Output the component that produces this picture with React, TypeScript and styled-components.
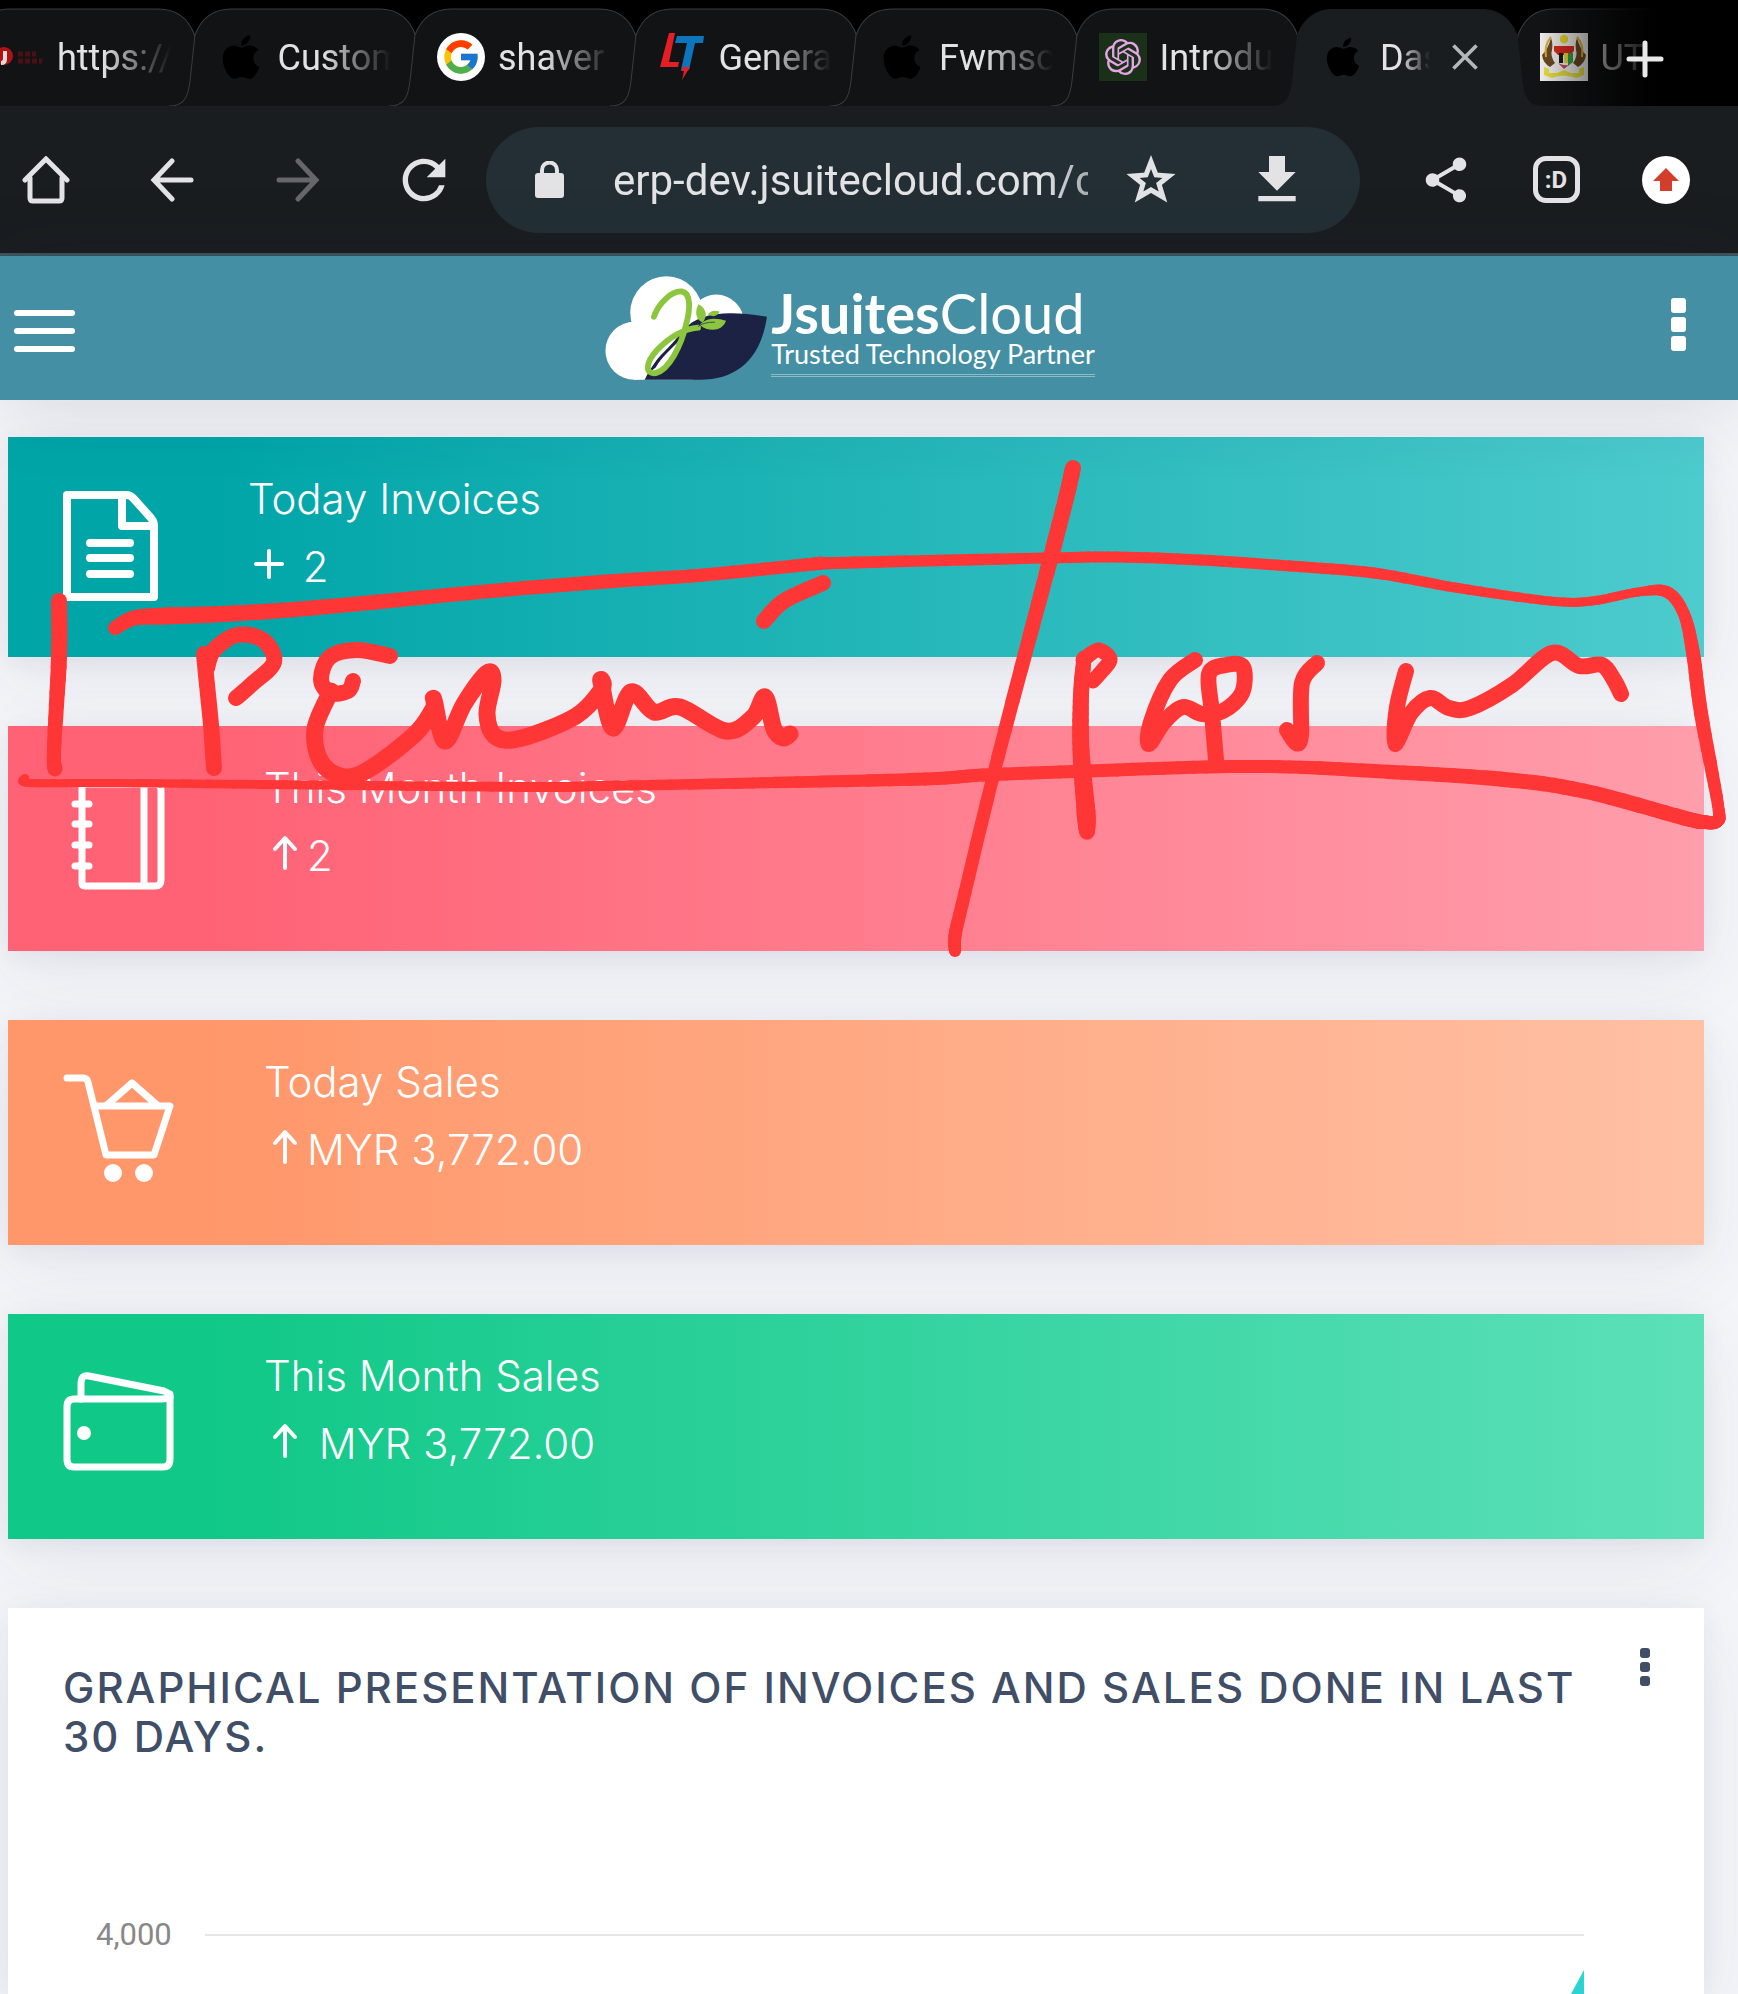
import React from "react";
import styled, { createGlobalStyle } from "styled-components";
import { FaApple } from "react-icons/fa";
import { FcGoogle } from "react-icons/fc";
import { SiOpenai } from "react-icons/si";
import { MdClose, MdFileDownload, MdRefresh, MdShare } from "react-icons/md";

const GlobalStyle = createGlobalStyle`
  * { box-sizing: border-box; }
  html, body { margin: 0; padding: 0; }
  body { background: #f4f5f9; font-family: Inter, "Open Sans", sans-serif; }
  button, input { font: inherit; color: inherit; border: 0; padding: 0; background: none; }
`;

const Page = styled.div`
  position: relative;
  display: flex;
  flex-direction: column;
  height: 100vh;
  overflow: hidden;
`;

/* ---------- browser tabs ---------- */

const TabStrip = styled.nav`
  display: flex;
  position: relative;
  flex: none;
  height: 106px;
  padding-top: 9px;
  background: #000;
  overflow: hidden;
`;

const TabList = styled.div`
  display: flex;
  flex: 1;
  margin-left: -26px;
`;

const Tab = styled.div<{ $active?: boolean }>`
  position: relative;
  z-index: ${(p) => (p.$active ? 2 : 1)};
  flex: 1 1 0;
  min-width: 0;
  display: flex;
  align-items: center;
  gap: 13px;
  height: 97px;
  padding: 0 24px 2px 22px;
`;

const TabShape = styled.svg`
  position: absolute;
  inset: 0;
  width: 100%;
  height: 97px;
  overflow: visible;
`;

const Favicon = styled.span`
  position: relative;
  flex: none;
  display: flex;
  align-items: center;
  justify-content: center;
  width: 48px;
  height: 48px;
  color: #000;
`;

const GoogleDisc = styled(Favicon)`
  border-radius: 50%;
  background: #fff;
`;

const OpenAiTile = styled(Favicon)`
  background: #1b3018;
  color: #e4a5e6;
`;

const TabTitle = styled.a`
  position: relative;
  flex: 1;
  min-width: 0;
  padding-top: 3px;
  overflow: hidden;
  white-space: nowrap;
  font: 400 36px/48px Roboto, sans-serif;
  color: #e3e3e3;
  text-decoration: none;
  mask-image: linear-gradient(to right, #000 40%, transparent 100%);
`;

const CloseButton = styled.button`
  position: relative;
  display: flex;
  flex: none;
  margin-right: 7px;
  color: #b4b7b9;
`;

const NewTabButton = styled.button`
  display: flex;
  color: #e9e9ea;
`;

const StripEnd = styled.div`
  position: absolute;
  z-index: 3;
  top: 0;
  right: 0;
  display: flex;
  align-items: center;
  justify-content: flex-end;
  width: 200px;
  height: 106px;
  padding: 12px 74px 0 0;
  background: linear-gradient(to right, transparent 0, #000 60%);
`;

const TabOutline = ({ active }: { active?: boolean }) => (
  <TabShape viewBox="0 0 220 97" preserveAspectRatio="none" aria-hidden="true">
    <path
      d="M-26 97C-12 97-7 90-5 72L0 26C6 10 18 0 36 0H184C202 0 214 10 220 26L225 72C227 90 232 97 246 97"
      fill={active ? "#191d20" : "#121315"}
      stroke={active ? "none" : "#3b3d3f"}
      strokeWidth="1"
    />
  </TabShape>
);

const JoomlaIcon = () => (
  <svg width="48" height="30" viewBox="0 0 48 30" aria-hidden="true">
    <circle cx="8" cy="14" r="9" fill="#b01212" />
    <path d="M9 9v8q0 4-4 4" fill="none" stroke="#ddd" strokeWidth="4" />
    <path d="M22 12h18M22 19h24" stroke="#4a1013" strokeWidth="5" strokeDasharray="5 2" />
  </svg>
);

const LtIcon = () => (
  <svg width="48" height="48" viewBox="0 0 48 48" aria-hidden="true">
    <path d="M11 0H17L11 29H21L20 34H2Z" fill="#e31e25" />
    <path d="M19 3H46L45 10H37L31 37H23L29 10H17Z" fill="#0d75bb" />
    <path d="M25 34H32L24 47 26 38H23Z" fill="#e31e25" />
  </svg>
);

const CrestIcon = () => (
  <svg width="48" height="48" viewBox="0 0 48 48" aria-hidden="true">
    <rect width="48" height="48" fill="#f1f0ee" />
    <path d="M20 4Q24 -1 28 4V8Q24 13 20 8Z" fill="#e6d82b" />
    <path d="M11 5Q13 10 12 17Q10 23 15 30L10 34Q3 30 2 22Q8 16 11 5Z" fill="#6b4a22" />
    <path d="M37 5Q35 10 36 17Q38 23 33 30L38 34Q45 30 46 22Q40 16 37 5Z" fill="#6b4a22" />
    <path d="M11 4Q4 12 6 24M37 4Q44 12 42 24" fill="none" stroke="#d9b23a" strokeWidth="2" />
    <path d="M14 13H34L32 30Q28 36 24 37Q20 36 16 30Z" fill="#f4f4f4" />
    <path d="M14 13H34V18L30 22H18L14 18Z" fill="#dc2a20" />
    <rect x="19" y="20" width="4" height="10" fill="#1c1c1c" />
    <rect x="24" y="20" width="4" height="10" fill="#e8dc3a" />
    <path d="M28 20H33V29L28 33Z" fill="#31a04a" />
    <path d="M18 30Q24 33 29 32L24 36Z" fill="#c9465a" />
    <path d="M4 34L9 36 9 40H17L24 37 31 40H39L39 36 44 34V42L36 45Q24 40 12 45L4 42Z" fill="#e6e03a" />
  </svg>
);

/* ---------- browser toolbar ---------- */

const Toolbar = styled.div`
  flex: none;
  display: flex;
  align-items: center;
  height: 150px;
  padding: 0 40px 0 14px;
  background: #191d20;
  border-bottom: 3px solid #3c545d;
`;

const NavButtons = styled.div`
  display: flex;
  gap: 62px;
`;

const ActionButtons = styled.div`
  display: flex;
  gap: 46px;
  margin-left: 54px;
`;

const IconButton = styled.button<{ $dim?: boolean }>`
  display: flex;
  align-items: center;
  justify-content: center;
  flex: none;
  width: 64px;
  height: 64px;
  color: ${(p) => (p.$dim ? "#66676a" : "#e3e3e5")};
`;

const AddressBar = styled.div`
  flex: 1;
  min-width: 0;
  display: flex;
  align-items: center;
  height: 106px;
  margin-left: 30px;
  padding: 0 51px 0 49px;
  border-radius: 53px;
  background: #232f35;
  color: #e3e3e5;
`;

const UrlInput = styled.input`
  flex: 1;
  min-width: 0;
  height: 64px;
  margin: 2px 31px 0 49px;
  font: 400 42px/64px Roboto, sans-serif;
  outline: 0;
  mask-image: linear-gradient(to right, #000 90%, rgba(0, 0, 0, 0.7) 100%);
`;

const AddressActions = styled.div`
  display: flex;
  gap: 62px;
`;

const TabCount = styled.span`
  display: flex;
  align-items: center;
  justify-content: center;
  width: 47px;
  height: 47px;
  border: 5px solid #e3e3e5;
  border-radius: 13px;
  font: 700 24px/24px Roboto, sans-serif;
`;

/* ---------- application header ---------- */

const Header = styled.header`
  position: relative;
  flex: none;
  display: grid;
  grid-template-columns: 1fr auto 1fr;
  align-items: center;
  height: 144px;
  padding: 0 52px 0 14px;
  background: #448fa4;
  box-shadow: 0 5px 80px rgba(40, 45, 65, 0.14);
`;

const MenuButton = styled.button`
  display: flex;
  flex-direction: column;
  gap: 12px;
  margin-top: 5px;
  width: 61px;
`;

const MenuBar = styled.span`
  height: 6px;
  border-radius: 3px;
  background: #fff;
`;

const Brand = styled.a`
  display: flex;
  align-items: center;
  gap: 4px;
  color: #fff;
  text-decoration: none;
`;

const BrandText = styled.span`
  display: flex;
  flex-direction: column;
  padding-top: 8px;
  font-family: Lato, sans-serif;
`;

const BrandName = styled.span`
  font-size: 56px;
  font-weight: 400;
  line-height: 50px;
  white-space: nowrap;
  b { font-weight: 700; }
`;

const BrandTagline = styled.span`
  padding-bottom: 4px;
  border-bottom: 3px double #8dbbc8;
  font-size: 27px;
  line-height: 32px;
  white-space: nowrap;
`;

const DotsButton = styled.button<{ $size: number; $gap: number }>`
  display: flex;
  flex: none;
  flex-direction: column;
  justify-self: end;
  align-self: start;
  gap: ${(p) => p.$gap}px;
  span {
    width: ${(p) => p.$size}px;
    height: ${(p) => p.$size}px;
    border-radius: 3px;
    background: currentColor;
  }
`;

const HeaderDots = styled(DotsButton)`
  margin-top: 42px;
  color: #fff;
`;

const LogoMark = () => (
  <svg width="162" height="104" viewBox="75 80 470 302" aria-hidden="true">
    <g fill="#fff">
      <circle cx="160" cy="297" r="84" />
      <circle cx="253" cy="186" r="105" />
      <circle cx="398" cy="214" r="80" />
      <path d="M160 381L150 230H400L330 381Z" />
    </g>
    <path d="M190 381C215 325 262 290 300 240C350 180 440 182 545 198C528 318 460 381 350 381Z" fill="#1b2244" />
    <path d="M206 358C220 330 262 288 300 262C282 300 262 345 224 362Z" fill="#fff" />
    <path d="M206 358C222 318 255 290 286 272C270 290 240 315 222 346Z" fill="#1b2244" />
    <path
      d="M217 198C230 160 268 122 298 125C326 130 322 180 310 222C296 280 262 352 222 362C190 366 192 332 226 295C256 264 300 234 345 230"
      fill="none"
      stroke="#8cc63f"
      strokeWidth="17"
      strokeLinecap="round"
    />
    <path d="M346 162C336 180 336 206 358 215C372 200 372 175 346 162Z" fill="#8cc63f" />
    <path d="M374 192C380 180 396 178 408 184C400 198 388 200 374 192Z" fill="#8cc63f" />
    <path d="M350 222C370 200 400 202 426 210C418 238 378 246 350 222Z" fill="#8cc63f" />
    <path d="M345 227Q360 214 394 214" fill="none" stroke="#1b2244" strokeWidth="2" />
  </svg>
);

/* ---------- dashboard ---------- */

const Main = styled.main`
  flex: 1;
  min-height: 0;
  display: flex;
  flex-direction: column;
  gap: 69px;
  padding: 37px 34px 0 8px;
`;

const cardShadow = "0 25px 80px rgba(52, 54, 90, 0.07), 0 5px 24px rgba(52, 54, 90, 0.06)";

const StatCard = styled.section<{ $from: string; $to: string }>`
  flex: none;
  display: flex;
  gap: 90px;
  padding: 54px 55px 56px;
  background: linear-gradient(to right, ${(p) => p.$from} 12%, ${(p) => p.$to} 100%);
  box-shadow: ${cardShadow};
  color: #fff;
  > svg { flex: none; }
`;

const StatText = styled.div`
  height: 110px;
  margin-top: -26px;
`;

const StatTitle = styled.h2`
  margin: 0;
  font-size: 42px;
  font-weight: 300;
  line-height: 68px;
`;

const StatValue = styled.p`
  display: flex;
  align-items: center;
  margin: 0;
  font-size: 42px;
  font-weight: 300;
  line-height: 68px;
  white-space: pre;
`;

const TrendIcon = styled.svg`
  flex: none;
  width: 43px;
  height: 38px;
  margin-bottom: 6px;
`;

const Plus = () => (
  <TrendIcon viewBox="0 0 43 38" fill="none" stroke="#fff" strokeWidth="4" strokeLinecap="round" aria-hidden="true">
    <path d="M21 6V32M8 19H34" />
  </TrendIcon>
);

const ArrowUp = () => (
  <TrendIcon viewBox="0 0 43 38" fill="none" stroke="#fff" strokeWidth="4" strokeLinecap="round" strokeLinejoin="round" aria-hidden="true">
    <path d="M21 5V34M11 15L21 4L31 15" />
  </TrendIcon>
);

const iconStroke = { fill: "none", stroke: "#fff", strokeWidth: 8, strokeLinejoin: "round", strokeLinecap: "round" } as const;

const InvoiceIcon = () => (
  <svg width="95" height="110" viewBox="0 0 95 110" {...iconStroke} aria-hidden="true">
    <path d="M4 4H63Q68 4 71 8L88 27Q91 30 91 35V106H4Z" />
    <path d="M59 5V35H90" />
    <path d="M27 52H67M27 67H67M27 83H67" />
  </svg>
);

const NotebookIcon = () => (
  <svg width="111" height="115" viewBox="0 0 111 115" {...iconStroke} strokeWidth="7" aria-hidden="true">
    <path d="M19 4H92Q98 4 98 10V100Q98 106 92 106H22Q19 106 19 103Z" />
    <path d="M81 5V105" />
    <path d="M12 24H26M12 44H26M12 65H26M12 86H26" />
  </svg>
);

const CartIcon = () => (
  <svg width="111" height="115" viewBox="0 0 111 115" {...iconStroke} strokeWidth="7" aria-hidden="true">
    <path d="M4 4H20Q24 4 25 8L43 81H91L107 32H31" />
    <path d="M44 31L69 9L94 31" />
    <circle cx="50" cy="99" r="9" fill="#fff" stroke="none" />
    <circle cx="81" cy="99" r="9" fill="#fff" stroke="none" />
  </svg>
);

const WalletIcon = () => (
  <svg width="111" height="115" viewBox="0 0 111 115" {...iconStroke} strokeWidth="7" aria-hidden="true">
    <path d="M11 31H99Q106 31 107 26V91Q107 99 100 99H11Q4 99 4 91V39Q4 31 11 31Z" />
    <path d="M18 31V16Q18 6 26 8L101 23Q107 25 107 30" />
    <circle cx="21" cy="65" r="7" fill="#fff" stroke="none" />
  </svg>
);

const ChartCard = styled.section`
  flex: 1;
  display: flex;
  flex-direction: column;
  padding: 40px 54px 0 55px;
  background: #fff;
  box-shadow: ${cardShadow};
`;

const ChartHeader = styled.div`
  display: flex;
  gap: 20px;
  color: #404e67;
`;

const ChartTitle = styled.h2`
  flex: 1;
  margin: 0;
  padding-top: 15px;
  font-size: 42px;
  font-weight: 500;
  line-height: 49px;
  letter-spacing: 2px;
  text-transform: uppercase;
`;

const ChartArea = styled.div`
  flex: 1;
  display: grid;
  grid-template-columns: auto 1fr;
  gap: 33px;
  margin-top: 156px;
  padding: 0 66px 0 33px;
`;

const AxisLabel = styled.span`
  font: 400 31px/36px Roboto, sans-serif;
  color: #888;
`;

const Plot = styled.div`
  display: flex;
  justify-content: flex-end;
  margin-top: 17px;
  border-top: 2px solid #e5e6e6;
`;

/* ---------- handwritten markup over the page ---------- */

const Ink = styled.svg`
  position: absolute;
  z-index: 5;
  top: 0;
  left: 0;
  width: 100%;
  pointer-events: none;
`;

/* x, y and, where the pen pressure changes, the line width */
type Point = [number, number, number?];

const span = (points: Point[], i: number) => {
  const a = points[Math.max(i - 1, 0)];
  const b = points[i];
  const c = points[i + 1];
  const e = points[Math.min(i + 2, points.length - 1)];
  return [b[0], b[1], b[0] + (c[0] - a[0]) / 6, b[1] + (c[1] - a[1]) / 6, c[0] - (e[0] - b[0]) / 6, c[1] - (e[1] - b[1]) / 6, c[0], c[1]];
};

const smooth = (points: Point[]) =>
  points.slice(1).reduce((d, _, i) => {
    const s = span(points, i);
    return `${d}C${s.slice(2).join(" ")}`;
  }, `M${points[0][0]} ${points[0][1]}`);

const STEPS = 8;

const bezier = (s: number[], t: number) => {
  const u = 1 - t;
  const at = (k: number) => u * u * u * s[k] + 3 * u * u * t * s[k + 2] + 3 * u * t * t * s[k + 4] + t * t * t * s[k + 6];
  return `${at(0).toFixed(1)} ${at(1).toFixed(1)}`;
};

const PressureStroke = ({ points }: { points: Point[] }) => (
  <>
    {points.slice(1).flatMap((end, i) => {
      const s = span(points, i);
      const from = points[i][2] ?? 14;
      const to = end[2] ?? 14;
      return Array.from({ length: STEPS }, (_, n) => (
        <path
          key={`${i}-${n}`}
          d={`M${bezier(s, n / STEPS)}L${bezier(s, (n + 1) / STEPS)}`}
          strokeWidth={from + ((to - from) * n) / STEPS}
        />
      ));
    })}
  </>
);

const pressureStrokes: Point[][] = [
  [[115, 628, 14], [134, 618, 15], [165, 616, 17], [223, 614, 16], [312, 608, 15], [491, 591, 14], [600, 582, 14], [703, 575, 13], [814, 564, 13], [837, 563, 12], [1044, 558, 11], [1117, 557, 11], [1200, 560, 11], [1290, 566, 11], [1374, 573, 11], [1458, 588, 10], [1550, 601, 9], [1592, 601, 9], [1638, 592, 9], [1667, 592, 12], [1684, 614, 12], [1693, 653, 14], [1701, 713, 14], [1718, 805, 12], [1717, 821, 13], [1704, 822, 14], [1684, 818, 15], [1584, 791, 15], [1500, 779, 15], [1374, 771, 14], [1290, 767, 13], [1206, 767, 13], [1088, 771, 13], [983, 775, 13], [925, 779, 13], [753, 783, 11], [600, 786, 10], [536, 787, 10], [312, 785, 9], [120, 783, 8], [31, 783, 8], [25, 778, 8]],
  [[1073, 468, 16], [1059, 526, 16], [998, 757, 13], [962, 905, 13], [955, 936, 13], [955, 951, 12]],
  [[1084, 658, 15], [1081, 695, 16], [1081, 750, 17], [1086, 812, 19], [1087, 832, 15]],
  [[59, 601, 16], [59, 657, 16], [54, 750, 14], [55, 769, 15]],
];

const strokes: { width: number; points: Point[] }[] = [
  { width: 16, points: [[204, 654], [206, 675], [211, 725], [214, 768]] },
  { width: 16, points: [[207, 668], [214, 650], [237, 635], [263, 640], [274, 662], [252, 684], [236, 698]] },
  { width: 16, points: [[390, 656], [357, 650], [330, 657], [321, 679], [330, 693], [348, 691], [353, 681]] },
  {
    width: 17,
    points: [[331, 691], [315, 729], [321, 762], [344, 777], [371, 768], [415, 734], [433, 709], [434, 700], [445, 741], [464, 704], [487, 673], [493, 681], [487, 714], [496, 737], [522, 738], [576, 716], [602, 689], [601, 682], [613, 728], [631, 692], [654, 712], [680, 707], [726, 731], [753, 717], [765, 697], [774, 729], [783, 738], [790, 734]],
  },
  { width: 16, points: [[764, 621], [784, 601], [823, 583]] },
  { width: 15, points: [[1083, 660], [1098, 650], [1110, 659], [1102, 671], [1093, 681]] },
  {
    width: 16,
    points: [[1195, 660], [1170, 680], [1151, 722], [1149, 744], [1164, 722], [1183, 707], [1202, 714], [1223, 711], [1242, 693], [1243, 667], [1226, 665], [1209, 674], [1212, 713], [1216, 760]],
  },
  { width: 16, points: [[1317, 663], [1302, 683], [1301, 735], [1296, 743], [1287, 730]] },
  {
    width: 16,
    points: [[1406, 671], [1397, 707], [1395, 744], [1411, 713], [1430, 698], [1449, 708], [1470, 708], [1512, 685], [1552, 653], [1579, 666], [1602, 665], [1614, 680], [1621, 694]],
  },
];

const stats = [
  { title: "Today Invoices", value: " 2", trend: <Plus />, icon: <InvoiceIcon />, from: "#00a5a8", to: "#4dcbcd" },
  { title: "This Month Invoices", value: "2", trend: <ArrowUp />, icon: <NotebookIcon />, from: "#ff6275", to: "#ff9eac" },
  { title: "Today Sales", value: "MYR 3,772.00", trend: <ArrowUp />, icon: <CartIcon />, from: "#ff976a", to: "#ffc0a4" },
  { title: "This Month Sales", value: " MYR 3,772.00", trend: <ArrowUp />, icon: <WalletIcon />, from: "#10c888", to: "#5ce0b8" },
];

const tabs = [
  { title: "https://", icon: <Favicon><JoomlaIcon /></Favicon> },
  { title: "Custom", icon: <Favicon><FaApple size={50} /></Favicon> },
  { title: "shaver", icon: <GoogleDisc><FcGoogle size={40} /></GoogleDisc> },
  { title: "Genera", icon: <Favicon><LtIcon /></Favicon> },
  { title: "Fwmsc", icon: <Favicon><FaApple size={50} /></Favicon> },
  { title: "Introdu", icon: <OpenAiTile><SiOpenai size={36} /></OpenAiTile> },
  { title: "Das", icon: <Favicon><FaApple size={44} /></Favicon>, active: true },
  { title: "UT", icon: <Favicon><CrestIcon /></Favicon> },
];

export default function App() {
  return (
    <>
      <GlobalStyle />
      <Page>
        <TabStrip aria-label="Browser tabs">
          <TabList>
            {tabs.map((tab) => (
              <Tab key={tab.title} $active={tab.active}>
                <TabOutline active={tab.active} />
                {tab.icon}
                <TabTitle href="#">{tab.title}</TabTitle>
                {tab.active && (
                  <CloseButton aria-label="Close tab"><MdClose size={44} /></CloseButton>
                )}
              </Tab>
            ))}
          </TabList>
          <StripEnd>
            <NewTabButton aria-label="New tab">
              <svg width="38" height="38" viewBox="0 0 38 38" stroke="currentColor" strokeWidth="5" strokeLinecap="round" aria-hidden="true">
                <path d="M19 3V35M3 19H35" />
              </svg>
            </NewTabButton>
          </StripEnd>
        </TabStrip>

        <Toolbar>
          <NavButtons>
            <IconButton aria-label="Home">
              <svg width="48" height="48" viewBox="0 0 48 48" fill="none" stroke="currentColor" strokeWidth="5" strokeLinecap="round" aria-hidden="true">
                <path d="M8 22V42Q8 45 11 45H37Q40 45 40 42V22" />
                <path d="M3 24L24 3L45 24" strokeLinejoin="miter" />
              </svg>
            </IconButton>
            <IconButton aria-label="Back">
              <svg width="44" height="44" viewBox="0 0 44 44" fill="none" stroke="currentColor" strokeWidth="5" strokeLinecap="round" aria-hidden="true">
                <path d="M41 22H5M22 3L4 22L22 41" />
              </svg>
            </IconButton>
            <IconButton aria-label="Forward" $dim>
              <svg width="44" height="44" viewBox="0 0 44 44" fill="none" stroke="currentColor" strokeWidth="5" strokeLinecap="round" aria-hidden="true">
                <path d="M3 22H39M22 3L40 22L22 41" />
              </svg>
            </IconButton>
            <IconButton aria-label="Reload"><MdRefresh size={64} /></IconButton>
          </NavButtons>
          <AddressBar>
            <svg width="29" height="37" viewBox="0 0 29 37" aria-hidden="true">
              <rect y="12" width="29" height="25" rx="3" fill="currentColor" />
              <path d="M7 13V9A7 7 0 0 1 22 9V13" fill="none" stroke="currentColor" strokeWidth="4" />
            </svg>
            <UrlInput aria-label="Address" defaultValue="erp-dev.jsuitecloud.com/c" />
            <AddressActions>
              <IconButton aria-label="Bookmark">
                <svg width="52" height="49" viewBox="0 0 52 49" fill="none" stroke="currentColor" strokeWidth="5" strokeMiterlimit="10" aria-hidden="true">
                  <path d="M26 7L31 20 44 21 34 29 38 42 26 35 14 42 18 29 8 21 21 20Z" />
                </svg>
              </IconButton>
              <IconButton aria-label="Download"><MdFileDownload size={64} /></IconButton>
            </AddressActions>
          </AddressBar>
          <ActionButtons>
            <IconButton aria-label="Share"><MdShare size={54} /></IconButton>
            <IconButton aria-label="Open tabs"><TabCount>:D</TabCount></IconButton>
            <IconButton aria-label="Update available">
              <svg width="48" height="48" viewBox="0 0 48 48" aria-hidden="true">
                <circle cx="24" cy="24" r="24" fill="#fff" />
                <path d="M24 12L37 25H30V35H18V25H11Z" fill="#d33d2c" />
              </svg>
            </IconButton>
          </ActionButtons>
        </Toolbar>

        <Header>
          <MenuButton aria-label="Menu"><MenuBar /><MenuBar /><MenuBar /></MenuButton>
          <Brand href="#">
            <LogoMark />
            <BrandText>
              <BrandName><b>Jsuites</b>Cloud</BrandName>
              <BrandTagline>Trusted Technology Partner</BrandTagline>
            </BrandText>
          </Brand>
          <HeaderDots $size={15} $gap={4} aria-label="More options"><span /><span /><span /></HeaderDots>
        </Header>

        <Main>
          {stats.map((stat) => (
            <StatCard key={stat.title} $from={stat.from} $to={stat.to}>
              {stat.icon}
              <StatText>
                <StatTitle>{stat.title}</StatTitle>
                <StatValue>{stat.trend}{stat.value}</StatValue>
              </StatText>
            </StatCard>
          ))}
          <ChartCard>
            <ChartHeader>
              <ChartTitle>Graphical presentation of invoices and sales done in last 30 days.</ChartTitle>
              <DotsButton $size={10} $gap={4} aria-label="Chart options"><span /><span /><span /></DotsButton>
            </ChartHeader>
            <ChartArea>
              <AxisLabel>4,000</AxisLabel>
              <Plot>
                <svg width="13" height="58" viewBox="0 0 13 58" aria-hidden="true">
                  <path d="M13 34V58H0Z" fill="#28d5d3" />
                </svg>
              </Plot>
            </ChartArea>
          </ChartCard>
        </Main>

        <Ink viewBox="0 0 1738 1000" fill="none" stroke="#ff3636" strokeLinecap="round" strokeLinejoin="round" aria-hidden="true">
          {pressureStrokes.map((points, i) => (
            <PressureStroke key={i} points={points} />
          ))}
          {strokes.map((stroke, i) => (
            <path key={i} d={smooth(stroke.points)} strokeWidth={stroke.width} />
          ))}
        </Ink>
      </Page>
    </>
  );
}
